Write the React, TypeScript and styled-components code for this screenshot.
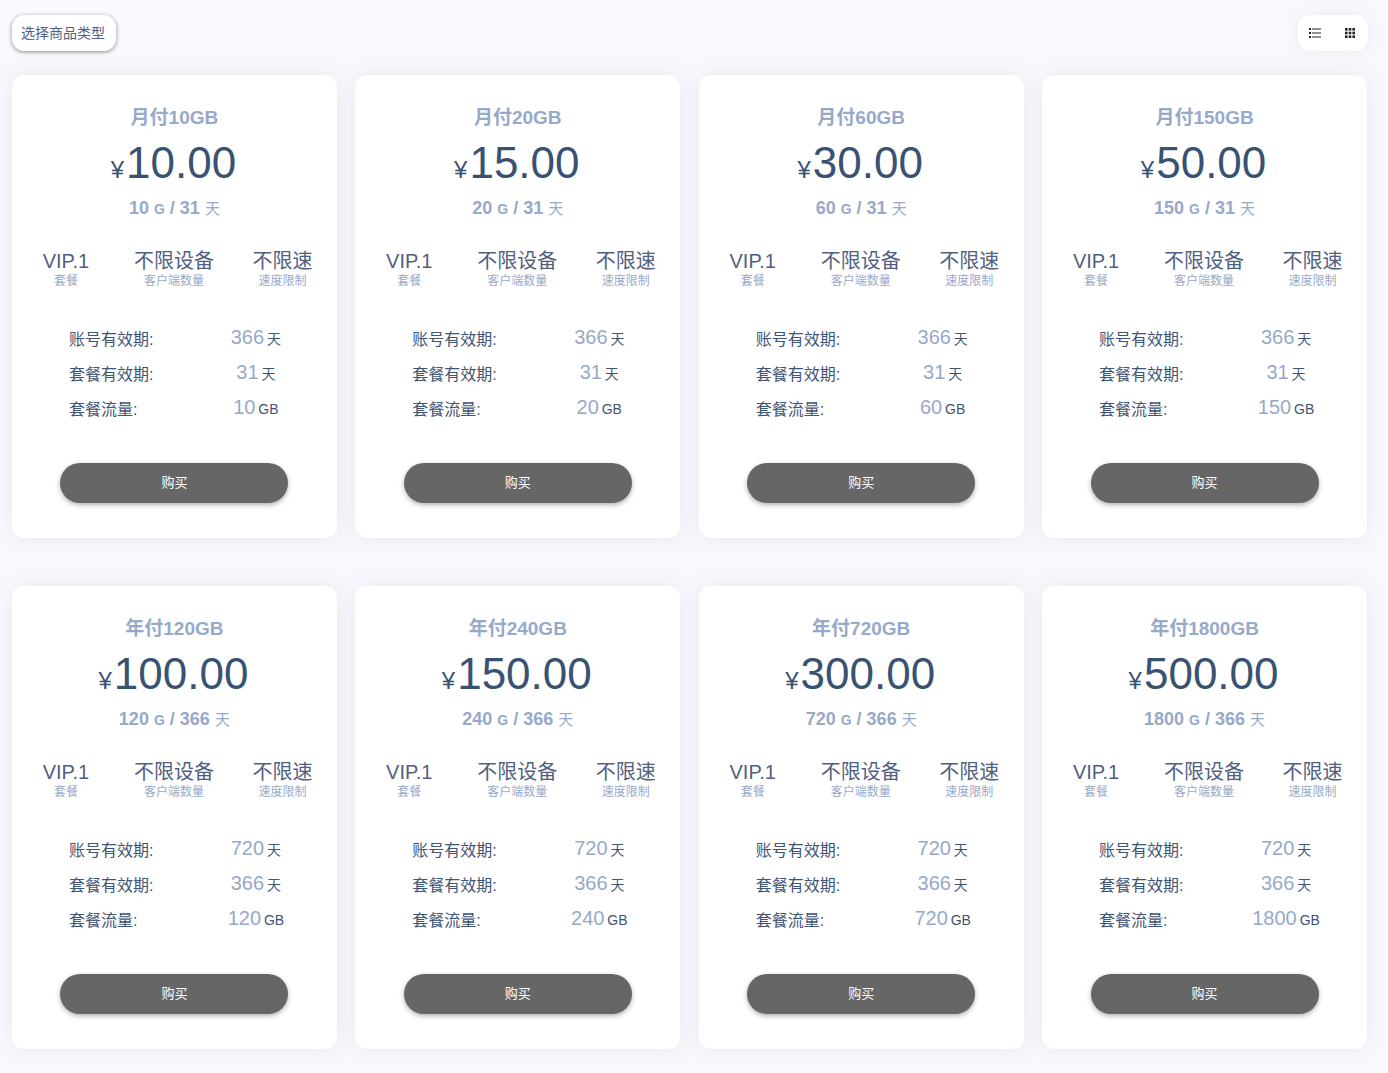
import React from 'react';
import styled, { createGlobalStyle } from 'styled-components';

const GlobalStyle = createGlobalStyle`
  html, body {
    margin: 0;
    padding: 0;
    background: #f8f9fe;
    font-family: "Liberation Sans", "Noto Sans CJK SC", sans-serif;
  }
`;

const Page = styled.div`
  padding: 15px 20px 0 11.9px;
  height: 1073px;
  box-sizing: border-box;
  overflow: hidden;
`;

const TopBar = styled.div`
  display: flex;
  justify-content: space-between;
  align-items: center;
  height: 36px;
  margin-bottom: 24px;
`;

const TypeButton = styled.button`
  height: 36px;
  width: 104px;
  padding: 0 2px 2px 0;
  border: 0;
  border-radius: 12px;
  background: #fff;
  color: #525f7f;
  font-family: inherit;
  font-size: 14px;
  box-shadow: 0 1px 4px rgba(0, 0, 0, 0.45);
`;

const ViewSwitch = styled.div`
  display: flex;
  align-items: center;
  width: 70px;
  height: 36px;
  border-radius: 12px;
  background: #fff;
  box-shadow: 0 0 16px rgba(136, 152, 170, 0.15);
`;

const ViewIcon = styled.svg`
  display: block;
  margin-left: 11px;
  & + & {
    margin-left: 24px;
  }
`;

const Grid = styled.div`
  display: grid;
  grid-template-columns: repeat(4, 325px);
  column-gap: 18.4px;
  row-gap: 48px;
`;

const Card = styled.div`
  height: 463px;
  box-sizing: border-box;
  padding-top: 31px;
  border-radius: 12px;
  background: #fff;
  text-align: center;
  box-shadow: 0 0 20px rgba(136, 152, 170, 0.16);
`;

const Title = styled.div`
  height: 24px;
  line-height: 24px;
  font-size: 19px;
  font-weight: 700;
  color: #97a9c9;
`;

const Price = styled.div`
  height: 50px;
  margin-top: 8px;
  padding-right: 2px;
  line-height: 50px;
  font-size: 44px;
  color: #3a5272;
`;

const Yen = styled.span`
  margin-right: 2px;
  font-size: 24px;
`;

const Sub = styled.div`
  height: 24px;
  margin-top: 8px;
  line-height: 24px;
  font-size: 18px;
  font-weight: 700;
  color: #97a9c9;
`;

const SubUnit = styled.span<{ $light?: boolean }>`
  font-size: ${(p) => (p.$light ? 15 : 14)}px;
  font-weight: ${(p) => (p.$light ? 400 : 700)};
`;

const Features = styled.div`
  display: grid;
  grid-template-columns: 108px 108px 109px;
  margin-top: 28px;
`;

const Feature = styled.div`
  color: #525f7f;
  font-size: 20px;
  line-height: 26px;
`;

const FeatureLabel = styled.div`
  margin-top: 1px;
  font-size: 12px;
  line-height: 12px;
  color: #97a9c9;
`;

const Specs = styled.div`
  display: grid;
  grid-template-columns: 137px 100px;
  grid-auto-rows: 35px;
  align-items: center;
  margin: 33px 0 0 57px;
  text-align: left;
`;

const SpecLabel = styled.div`
  font-size: 16px;
  color: #3f5575;
`;

const SpecValue = styled.div`
  text-align: center;
  font-size: 14px;
  word-spacing: -1px;
  color: #3f5575;
`;

const SpecNumber = styled.span`
  font-size: 20px;
  color: #97a9c9;
`;

const BuyButton = styled.button`
  display: block;
  width: 228px;
  height: 40px;
  margin: 38px auto 0;
  padding: 0 0 3px;
  border: 0;
  border-radius: 20px;
  background: #666;
  color: #fff;
  font-family: inherit;
  font-size: 13px;
  box-shadow: 0 2px 5px rgba(0, 0, 0, 0.3);
`;

const plans = [
  { name: '月付10GB', price: '10.00', gb: 10, period: 31 },
  { name: '月付20GB', price: '15.00', gb: 20, period: 31 },
  { name: '月付60GB', price: '30.00', gb: 60, period: 31 },
  { name: '月付150GB', price: '50.00', gb: 150, period: 31 },
  { name: '年付120GB', price: '100.00', gb: 120, period: 366 },
  { name: '年付240GB', price: '150.00', gb: 240, period: 366 },
  { name: '年付720GB', price: '300.00', gb: 720, period: 366 },
  { name: '年付1800GB', price: '500.00', gb: 1800, period: 366 },
];

const ListIcon = () => (
  <ViewIcon width="12" height="10" viewBox="0 0 12 10">
    <g fill="#222">
      <rect x="0" y="0" width="2" height="2" />
      <rect x="0" y="4" width="2" height="2" />
      <rect x="0" y="8" width="2" height="2" />
      <rect x="3" y="0.5" width="9" height="1" />
      <rect x="3" y="4.5" width="9" height="1" />
      <rect x="3" y="8.5" width="9" height="1" />
    </g>
  </ViewIcon>
);

const GridIcon = () => (
  <ViewIcon width="10" height="10" viewBox="0 0 10 10">
    <g fill="#222">
      {[0, 3.7, 7.4].map((y) =>
        [0, 3.7, 7.4].map((x) => <rect key={`${x}-${y}`} x={x} y={y} width="2.6" height="2.6" />)
      )}
    </g>
  </ViewIcon>
);

export default function App() {
  return (
    <Page>
      <GlobalStyle />
      <TopBar>
        <TypeButton>选择商品类型</TypeButton>
        <ViewSwitch>
          <ListIcon />
          <GridIcon />
        </ViewSwitch>
      </TopBar>
      <Grid>
        {plans.map((plan) => {
          const account = plan.period === 31 ? 366 : 720;
          return (
            <Card key={plan.name}>
              <Title>{plan.name}</Title>
              <Price>
                <Yen>¥</Yen>
                {plan.price}
              </Price>
              <Sub>
                {plan.gb} <SubUnit>G</SubUnit> / {plan.period} <SubUnit $light>天</SubUnit>
              </Sub>
              <Features>
                <Feature>
                  VIP.1
                  <FeatureLabel>套餐</FeatureLabel>
                </Feature>
                <Feature>
                  不限设备
                  <FeatureLabel>客户端数量</FeatureLabel>
                </Feature>
                <Feature>
                  不限速
                  <FeatureLabel>速度限制</FeatureLabel>
                </Feature>
              </Features>
              <Specs>
                <SpecLabel>账号有效期:</SpecLabel>
                <SpecValue>
                  <SpecNumber>{account}</SpecNumber> 天
                </SpecValue>
                <SpecLabel>套餐有效期:</SpecLabel>
                <SpecValue>
                  <SpecNumber>{plan.period}</SpecNumber> 天
                </SpecValue>
                <SpecLabel>套餐流量:</SpecLabel>
                <SpecValue>
                  <SpecNumber>{plan.gb}</SpecNumber> GB
                </SpecValue>
              </Specs>
              <BuyButton>购买</BuyButton>
            </Card>
          );
        })}
      </Grid>
    </Page>
  );
}
